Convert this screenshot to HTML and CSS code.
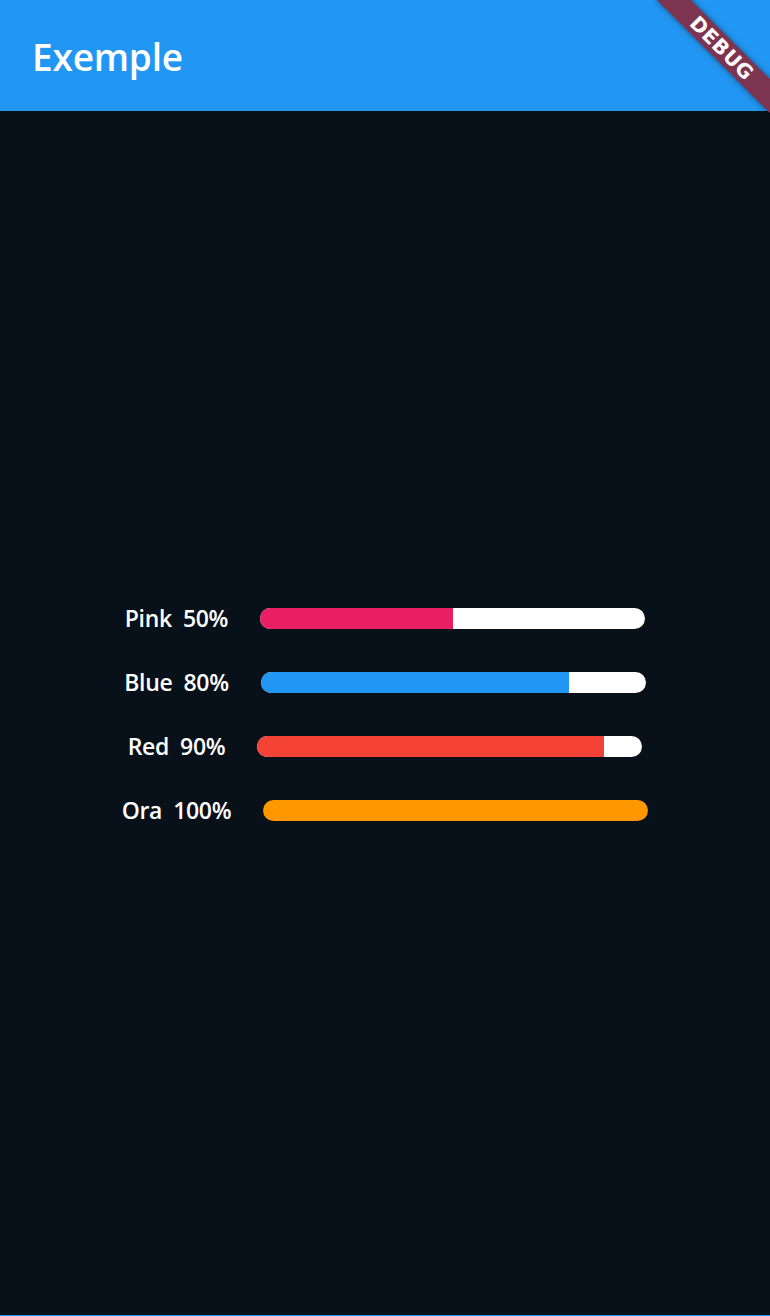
FILE: index.html
```html
<!DOCTYPE html>
<html lang="fr">
<head>
<meta charset="utf-8">
<title>Exemple</title>
<link rel="stylesheet" href="styles.css">
</head>
<body>
<div class="app">
  <header class="appbar">
    <h1 class="title">Exemple</h1>
  </header>
  <main class="content">
    <div class="list">
      <div class="row">
        <div class="label"><span>Pink</span><span>50%</span></div>
        <div class="track"><div class="fill pink" style="width:50%"></div></div>
      </div>
      <div class="row">
        <div class="label"><span>Blue</span><span>80%</span></div>
        <div class="track"><div class="fill blue" style="width:80%"></div></div>
      </div>
      <div class="row">
        <div class="label"><span>Red</span><span>90%</span></div>
        <div class="track"><div class="fill red" style="width:90%"></div></div>
      </div>
      <div class="row">
        <div class="label"><span>Ora</span><span>100%</span></div>
        <div class="track"><div class="fill orange" style="width:100%"></div></div>
      </div>
    </div>
  </main>
</div>
<div class="banner"><div class="ribbon">DEBUG</div></div>
</body>
</html>
```
FILE: styles.css
```css
* { box-sizing: border-box; }
html, body {
  margin: 0;
  padding: 0;
  width: 770px;
  height: 1316px;
  overflow: hidden;
}
body {
  font-family: "Open Sans", "Noto Sans", sans-serif;
  background: #08101a;
  color: #ffffff;
}
.app {
  display: flex;
  flex-direction: column;
  height: 1316px;
}
.appbar {
  height: 111px;
  flex: none;
  background: #2196f3;
  display: flex;
  align-items: center;
  padding-left: 32px;
  padding-top: 2px;
}
.title {
  margin: 0;
  font-size: 37px;
  font-weight: 600;
  letter-spacing: -0.2px;
  color: #ffffff;
}
.content {
  flex: 1;
  background: #08101a;
  display: flex;
  align-items: center;
  justify-content: center;
  border-bottom: 1px solid #2196f3;
}
.list {
  display: flex;
  flex-direction: column;
  gap: 43px;
  padding-top: 3px;
}
.row {
  display: flex;
  align-items: center;
  justify-content: center;
  gap: 32px;
  height: 21px;
}
.label {
  display: flex;
  gap: 11px;
  font-size: 23px;
  font-weight: 600;
  letter-spacing: -0.3px;
  line-height: 21px;
  white-space: nowrap;
}
.track {
  width: 385px;
  height: 21px;
  border-radius: 11px;
  background: #ffffff;
  overflow: hidden;
}
.fill { height: 100%; }
.pink { background: #e91e63; }
.blue { background: #2196f3; }
.red { background: #f44336; }
.orange { background: #ff9800; }

.banner {
  position: absolute;
  top: 0;
  right: 0;
  width: 120px;
  height: 120px;
  overflow: hidden;
  pointer-events: none;
}
.ribbon {
  position: absolute;
  left: 40px;
  top: 56px;
  width: 160px;
  height: 24px;
  transform-origin: 80px -56px;
  transform: rotate(45deg);
  background: #7c3451;
  box-shadow: 0 0 6px rgba(0, 0, 0, 0.45);
  color: #ffffff;
  font-family: "DejaVu Sans", sans-serif;
  font-weight: 700;
  font-size: 20px;
  line-height: 24px;
  text-align: center;
  letter-spacing: 0.5px;
}
```
